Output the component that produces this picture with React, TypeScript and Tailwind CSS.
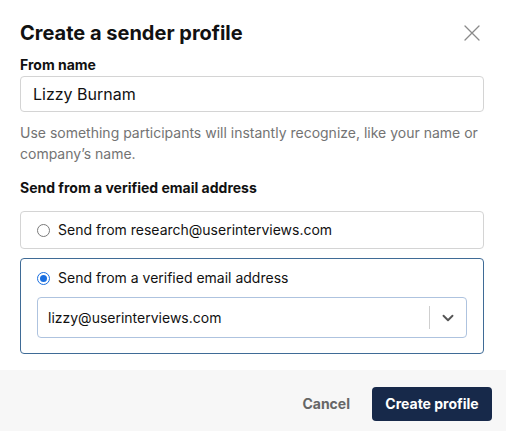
import { ChevronDown } from "lucide-react";

function Radio({ checked }: { checked?: boolean }) {
  if (checked) {
    return (
      <span className="flex h-[13px] w-[13px] shrink-0 items-center justify-center rounded-full border-[1.5px] border-[#1a6fe0] bg-white">
        <span className="h-[7px] w-[7px] rounded-full bg-[#1a6fe0]" />
      </span>
    );
  }
  return (
    <span className="h-[13px] w-[13px] shrink-0 rounded-full border border-[#7a7a7a] bg-white" />
  );
}

export default function App() {
  return (
    <div className="flex h-[431px] w-[506px] flex-col overflow-hidden bg-white font-['Inter',sans-serif] text-[#111]">
      <div className="flex flex-col pb-4 pl-5 pr-[22px] pt-[19px]">
        <div className="flex items-center justify-between">
          <h1 className="text-[20px] font-bold leading-7">
            Create a sender profile
          </h1>
          <button className="mr-[4px] text-[#8a8a8a]">
            <svg
              width="16"
              height="16"
              viewBox="0 0 16 16"
              fill="none"
              stroke="currentColor"
              strokeWidth="1.3"
              strokeLinecap="round"
            >
              <path d="M1 1L15 15M15 1L1 15" />
            </svg>
          </button>
        </div>

        <label className="mt-2 text-sm font-bold leading-5">From name</label>
        <div className="mt-px flex h-9 items-center rounded-[4px] border border-[#d4d4d4] px-3">
          <span className="text-base">Lizzy Burnam</span>
        </div>
        <p className="mt-[10px] text-sm leading-[21px] text-[#737373]">
          Use something participants will instantly recognize, like your name or
          company’s name.
        </p>

        <p className="mt-[14px] text-sm font-bold leading-5">
          Send from a verified email address
        </p>

        <div className="mt-[13px] flex items-center gap-[8px] rounded-[4px] border border-[#d4d4d4] px-4 py-2">
          <Radio />
          <span className="text-sm leading-5">
            Send from research@userinterviews.com
          </span>
        </div>

        <div className="mt-[9px] flex flex-col rounded-[4px] border border-[#3f6b96] px-4 pb-[15px] pt-[9px]">
          <div className="flex items-center gap-[8px]">
            <Radio checked />
            <span className="text-sm leading-5">
              Send from a verified email address
            </span>
          </div>
          <div className="mt-[9px] flex h-[41px] items-center rounded-[4px] border border-[#aec3df]">
            <span className="flex-1 pl-[10px] text-sm">
              lizzy@userinterviews.com
            </span>
            <span className="h-[23px] w-px bg-[#cfcfcf]" />
            <span className="flex w-[36px] items-center justify-center text-[#555]">
              <ChevronDown className="h-[18px] w-[18px]" strokeWidth={2.5} />
            </span>
          </div>
        </div>
      </div>

      <div className="flex flex-1 items-start justify-end gap-[10px] bg-[#f7f7f7] pr-[14px] pt-[17px]">
        <button className="h-[34px] px-3 text-sm font-bold text-[#666]">
          Cancel
        </button>
        <button className="h-[34px] w-[120px] rounded-[4px] bg-[#17294a] text-sm font-bold text-white">
          Create profile
        </button>
      </div>
    </div>
  );
}
